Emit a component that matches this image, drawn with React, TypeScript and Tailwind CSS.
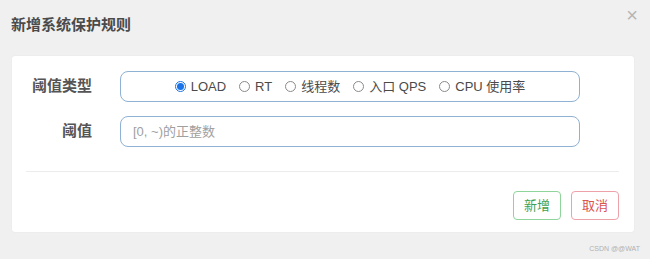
const options = ['LOAD', 'RT', '线程数', '入口 QPS', 'CPU 使用率'];

function Radio({ checked }: { checked: boolean }) {
  return checked ? (
    <span className="w-[11px] h-[11px] rounded-full border border-[#1a73e8] flex items-center justify-center bg-white">
      <span className="w-[7px] h-[7px] rounded-full bg-[#1a73e8]" />
    </span>
  ) : (
    <span className="w-[11px] h-[11px] rounded-full border border-[#8a8a8a] bg-white" />
  );
}

export default function App() {
  return (
    <div
      className="w-[650px] h-[259px] bg-[#f0f0f0] relative overflow-hidden"
      style={{ fontFamily: '"Liberation Sans", "Noto Sans CJK SC", sans-serif' }}
    >
      {/* Header */}
      <div className="flex items-start justify-between pl-[11px] pr-[12px] pt-[15px] h-[56px]">
        <h2 className="text-[15px] font-bold text-[#4a4a4a] leading-[20px]">新增系统保护规则</h2>
        <button className="text-[#b5b5b5] text-[20px] leading-none -mt-[10px] font-light">×</button>
      </div>

      {/* Body */}
      <div className="ml-[12px] w-[622px] h-[176px] bg-white rounded-[3px] shadow-[0_0_2px_rgba(0,0,0,0.06)] pt-[15px] px-[14px]">
        <div className="flex flex-col gap-[14px]">
          <div className="flex items-center">
            <label className="w-[80px] pr-[14px] text-right text-[15px] font-bold text-[#555]">阈值类型</label>
            <div className="ml-[14px] w-[460px] h-[31px] border border-[#8fb1d3] rounded-[8px] flex items-center justify-center gap-[13px] text-[13px] text-[#4a4a4a]">
              {options.map((o, i) => (
                <span key={o} className="flex items-center gap-[5px]">
                  <Radio checked={i === 0} />
                  <span>{o}</span>
                </span>
              ))}
            </div>
          </div>
          <div className="flex items-center">
            <label className="w-[80px] pr-[14px] text-right text-[15px] font-bold text-[#555]">阈值</label>
            <input
              className="ml-[14px] w-[460px] h-[31px] border border-[#8fb1d3] rounded-[8px] px-[12px] text-[13px] text-[#555] placeholder:text-[#a0a0a0] outline-none"
              placeholder="[0, ~)的正整数"
            />
          </div>
        </div>

        <div className="mt-[24px] h-px bg-[#ececec] mr-[1px]" />

        <div className="flex justify-end gap-[10px] mt-[19px] mr-[1px]">
          <button className="w-[48px] h-[29px] border border-[#8fd49a] rounded-[4px] text-[13px] text-[#3fa14f]">新增</button>
          <button className="w-[48px] h-[29px] border border-[#eda1a8] rounded-[4px] text-[13px] text-[#d9534f]">取消</button>
        </div>
      </div>

      <div className="absolute right-[10px] bottom-[5px] text-[7px] text-[#b0b0b0]">CSDN @@WAT</div>
    </div>
  );
}
